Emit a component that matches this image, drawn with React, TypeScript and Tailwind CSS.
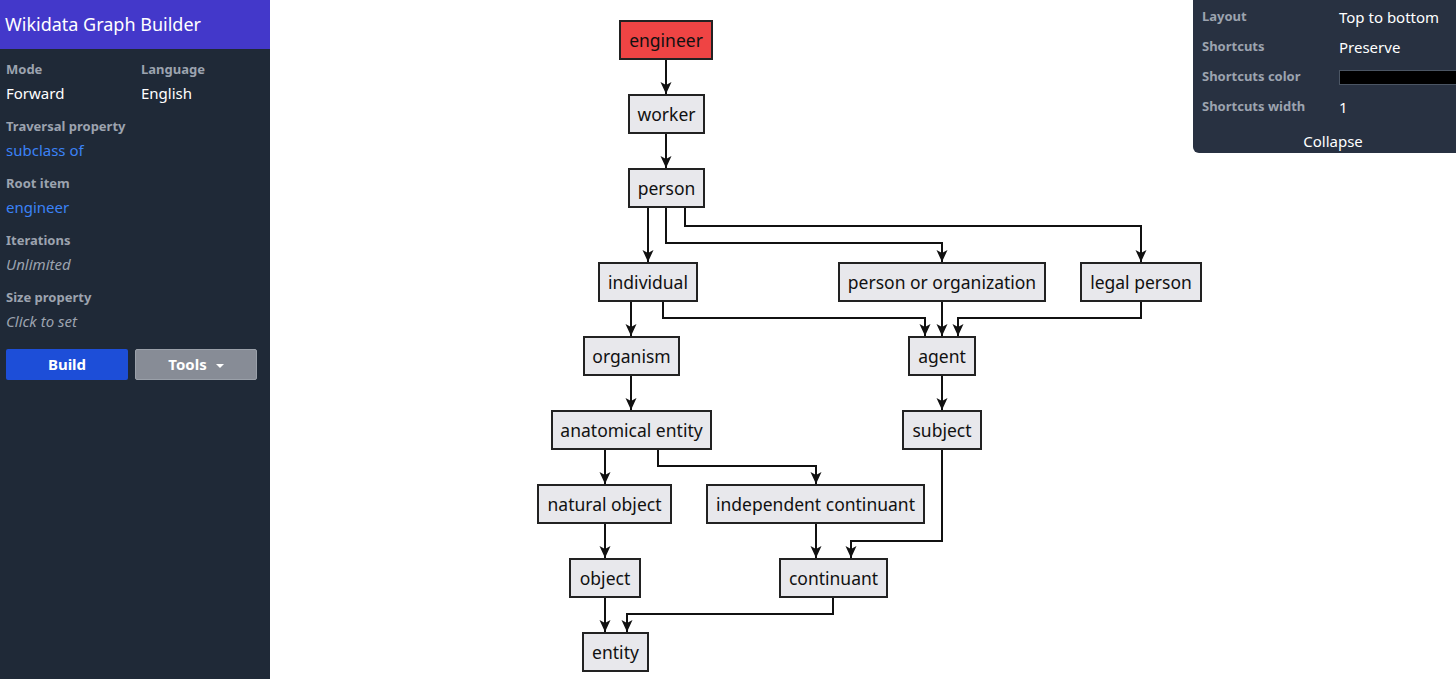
type GraphNode = { label: string; x: number; y: number; w: number; root?: boolean };

// page coordinates; the canvas starts at x=270
const nodes: GraphNode[] = [
  { label: "engineer", x: 619, y: 20, w: 94, root: true },
  { label: "worker", x: 628, y: 94, w: 77 },
  { label: "person", x: 628, y: 168, w: 77 },
  { label: "individual", x: 598, y: 262, w: 100 },
  { label: "person or organization", x: 838, y: 262, w: 208 },
  { label: "legal person", x: 1080, y: 262, w: 122 },
  { label: "organism", x: 583, y: 336, w: 97 },
  { label: "agent", x: 908, y: 336, w: 68 },
  { label: "anatomical entity", x: 551, y: 410, w: 161 },
  { label: "subject", x: 902, y: 410, w: 80 },
  { label: "natural object", x: 537, y: 484, w: 135 },
  { label: "independent continuant", x: 706, y: 484, w: 219 },
  { label: "object", x: 569, y: 558, w: 72 },
  { label: "continuant", x: 779, y: 558, w: 109 },
  { label: "entity", x: 582, y: 632, w: 67 },
];

// [path, arrow x, arrow tip y]
const edges: [string, number, number][] = [
  ["M666 60 V94", 666, 94],
  ["M666 134 V168", 666, 168],
  ["M648 208 V262", 648, 262],
  ["M666 208 V243 H942 V262", 942, 262],
  ["M685 208 V226 H1141 V262", 1141, 262],
  ["M631 302 V336", 631, 336],
  ["M663 302 V318 H925 V336", 925, 336],
  ["M942 302 V336", 942, 336],
  ["M1141 302 V318 H958 V336", 958, 336],
  ["M631 376 V410", 631, 410],
  ["M942 376 V410", 942, 410],
  ["M605 450 V484", 605, 484],
  ["M658 450 V466 H816 V484", 816, 484],
  ["M942 450 V541 H851 V558", 851, 558],
  ["M605 524 V558", 605, 558],
  ["M816 524 V558", 816, 558],
  ["M605 598 V632", 605, 632],
  ["M833 598 V614 H627 V632", 627, 632],
];

const OFFSET = 270;

function Field({ label, value, tone = "white" }: { label: string; value: string; tone?: "white" | "link" | "muted" }) {
  const valueClass =
    tone === "link" ? "text-[#3b82f6]" : tone === "muted" ? "text-[#9ca3af] italic" : "text-white";
  return (
    <div className="mb-[11px]">
      <div className="text-[13px] leading-[20px] font-bold text-[#9ca3af]">{label}</div>
      <div className={`mt-[2px] text-[15px] leading-[24px] ${valueClass}`}>{value}</div>
    </div>
  );
}

function Sidebar() {
  return (
    <aside className="w-[270px] shrink-0 h-full bg-[#1f2937]">
      <div className="h-[49px] bg-[#4338ca] px-[5px] flex items-center text-white text-[18px]">
        Wikidata Graph Builder
      </div>
      <div className="px-[6px] pt-[10px]">
        <div className="grid grid-cols-[135px_1fr]">
          <Field label="Mode" value="Forward" />
          <Field label="Language" value="English" />
        </div>
        <Field label="Traversal property" value="subclass of" tone="link" />
        <Field label="Root item" value="engineer" tone="link" />
        <Field label="Iterations" value="Unlimited" tone="muted" />
        <Field label="Size property" value="Click to set" tone="muted" />
        <div className="mt-[16px] flex gap-[7px]">
          <button className="w-[122px] h-[31px] rounded-[2px] bg-[#1d4ed8] text-white text-[15px] font-bold">
            Build
          </button>
          <button className="w-[122px] h-[31px] rounded-[2px] bg-[#878c96] border border-[#9aa0a9] text-white text-[15px] font-bold flex items-center justify-center gap-[9px]">
            Tools
            <span className="w-0 h-0 border-l-[4px] border-r-[4px] border-t-[4px] border-l-transparent border-r-transparent border-t-white mt-[2px]" />
          </button>
        </div>
      </div>
    </aside>
  );
}

function SettingsPanel() {
  const rows: [string, React.ReactNode][] = [
    ["Layout", "Top to bottom"],
    ["Shortcuts", "Preserve"],
    ["Shortcuts color", <div className="h-[15px] w-full bg-black border border-[#4b5563]" />],
    ["Shortcuts width", "1"],
  ];
  return (
    <div className="absolute top-0 left-[923px] w-[280px] h-[153px] bg-[#283141] rounded-bl-[6px] pt-[2px]">
      {rows.map(([label, value]) => (
        <div key={label} className="flex items-center h-[30px]">
          <div className="w-[146px] shrink-0 pl-[9px] text-[13px] font-bold text-[#9ca3af]">{label}</div>
          <div className="flex-1 text-[15px] text-white">{value}</div>
        </div>
      ))}
      <div className="mt-[6px] h-[26px] flex items-center justify-center text-[15px] text-white">
        Collapse
      </div>
    </div>
  );
}

function Graph() {
  return (
    <div className="relative flex-1 h-full bg-white overflow-hidden">
      <svg className="absolute left-0 top-0" width={1186} height={679} viewBox={`${OFFSET} 0 1186 679`}>
        {edges.map(([d, ax, ay], i) => (
          <g key={i}>
            <path d={d} fill="none" stroke="#111" strokeWidth={2} />
            <path
              d={`M${ax - 5.5} ${ay - 12} L${ax} ${ay} L${ax + 5.5} ${ay - 12} L${ax} ${ay - 9} Z`}
              fill="#111"
            />
          </g>
        ))}
      </svg>
      {nodes.map((n) => (
        <div
          key={n.label}
          className={`absolute h-[40px] border-2 border-[#222] flex items-center justify-center text-[17.5px] text-[#111] whitespace-nowrap ${
            n.root ? "bg-[#ef4444]" : "bg-[#e8e8ec]"
          }`}
          style={{ left: n.x - OFFSET, top: n.y, width: n.w }}
        >
          {n.label}
        </div>
      ))}
      <SettingsPanel />
    </div>
  );
}

export default function App() {
  return (
    <div className="flex h-[679px] w-full overflow-hidden font-['Segoe_UI','Noto_Sans',sans-serif]">
      <Sidebar />
      <Graph />
    </div>
  );
}
